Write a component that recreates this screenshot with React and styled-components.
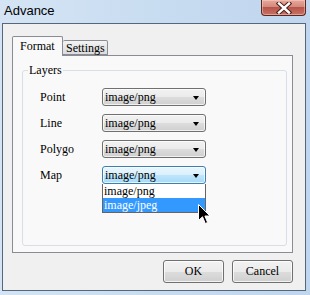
import styled, { createGlobalStyle } from "styled-components";

const Global = createGlobalStyle`
    html, body { margin: 0; padding: 0; }
    body { background: #c8dcf0; }
`;

const serif = `"Liberation Serif", "Times New Roman", serif`;

export default function App() {
    let layers = ["Point", "Line", "Polygo", "Map"];

    return (
        <Window>
            <Global />
            <TitleBar>
                <Title>Advance</Title>
                <CloseButton>
                    <svg width="16" height="12" viewBox="0 0 16 12">
                        <path d="M3 1.5 L13 10.5 M13 1.5 L3 10.5" stroke="#4a1d16" strokeWidth="4.4" strokeLinecap="square" />
                        <path d="M3 1.5 L13 10.5 M13 1.5 L3 10.5" stroke="#ffffff" strokeWidth="2.4" strokeLinecap="square" />
                    </svg>
                </CloseButton>
            </TitleBar>
            <Client>
                <TabStrip>
                    <Tab selected>Format</Tab>
                    <Tab>Settings</Tab>
                </TabStrip>
                <TabPanel>
                    <GroupBox>
                        <Legend>Layers</Legend>
                        <Rows>
                            {layers.map((name) => (
                                <Row key={name}>
                                    <Label>{name}</Label>
                                    <SelectWrap>
                                        <Select hot={name === "Map"}>
                                            <span>image/png</span>
                                            <Arrow />
                                        </Select>
                                        {name === "Map" && (
                                            <>
                                                <DropList>
                                                    <Option>image/png</Option>
                                                    <Option active>image/jpeg</Option>
                                                </DropList>
                                                <Cursor width="13" height="21" viewBox="0 0 13 21">
                                                    <path d="M0.5 0.5 L0.5 16.5 L4.5 12.8 L7.3 19.5 L9.6 18.5 L6.9 12 L12 12 Z" fill="#000" stroke="#fff" strokeWidth="1" />
                                                </Cursor>
                                            </>
                                        )}
                                    </SelectWrap>
                                </Row>
                            ))}
                        </Rows>
                    </GroupBox>
                </TabPanel>
                <Buttons>
                    <Button>OK</Button>
                    <Button>Cancel</Button>
                </Buttons>
            </Client>
        </Window>
    )
}

const Window = styled.div`
    width: 310px;
    height: 295px;
    box-sizing: border-box;
    padding: 0 4px 4px 2px;
    display: flex;
    flex-direction: column;
    background: linear-gradient(to right, #d4e4f4, #c6dbf0 60%, #c0d6ee);
`

const TitleBar = styled.div`
    height: 24px;
    display: flex;
    justify-content: space-between;
    align-items: flex-start;
`

const Title = styled.div`
    padding: 3px 0 0 2px;
    font-family: "Liberation Sans", Arial, sans-serif;
    font-size: 13px;
    line-height: 15px;
    color: #000;
`

const CloseButton = styled.div`
    width: 45px;
    height: 16px;
    box-sizing: border-box;
    border: 1px solid #5a2820;
    border-top: none;
    border-radius: 0 0 4px 4px;
    display: flex;
    align-items: center;
    justify-content: center;
    background: linear-gradient(#e6a89b, #d48a7c 45%, #b8554a 50%, #c77264 100%);
    box-shadow: inset 0 0 0 1px rgba(255, 220, 210, 0.45);
`

const Client = styled.div`
    flex: 1;
    display: flex;
    flex-direction: column;
    border: 1px solid #55677a;
    background: #f0f0f0;
    padding: 12px 12px 7px 9px;
`

const TabStrip = styled.div`
    display: flex;
    align-items: flex-end;
    height: 19px;
    position: relative;
    z-index: 1;
`

const Tab = styled.div`
    box-sizing: border-box;
    border: 1px solid #898c95;
    border-bottom: ${(p) => (p.selected ? "none" : "1px solid #898c95")};
    border-left: ${(p) => (p.selected ? "1px solid #898c95" : "none")};
    border-radius: 2px 2px 0 0;
    height: ${(p) => (p.selected ? "20px" : "15px")};
    margin-bottom: ${(p) => (p.selected ? "-1px" : "0")};
    width: ${(p) => (p.selected ? "51px" : "45px")};
    padding: ${(p) => (p.selected ? "3px 0 0 7px" : "1px 0 0 3px")};
    background: ${(p) => (p.selected ? "#f9f9f9" : "linear-gradient(#f4f4f4, #e6e6e6 50%, #dcdcdc)")};
    font-family: ${serif};
    font-size: 12px;
    line-height: 13px;
    color: #000;
`

const TabPanel = styled.div`
    height: 198px;
    box-sizing: border-box;
    border: 1px solid #898c95;
    background: #f9f9f9;
    padding: 7px 5px 6px 9px;
    display: flex;
`

const GroupBox = styled.fieldset`
    flex: 1;
    margin: 0;
    padding: 0;
    min-width: 0;
    border: 1px solid #d5dfe5;
    border-radius: 3px;
`

const Legend = styled.legend`
    margin-left: 5px;
    padding: 0 1px;
    font-family: ${serif};
    font-size: 12px;
    line-height: 15px;
    color: #000;
`

const Rows = styled.div`
    display: grid;
    row-gap: 8px;
    padding: 10px 0 0 17px;
`

const Row = styled.div`
    display: grid;
    grid-template-columns: 62px 104px;
    align-items: center;
    height: 18px;
`

const Label = styled.div`
    font-family: ${serif};
    font-size: 12px;
    color: #000;
`

const SelectWrap = styled.div`
    position: relative;
`

const Select = styled.div`
    height: 18px;
    box-sizing: border-box;
    border: 1px solid ${(p) => (p.hot ? "#3c7fb1" : "#707070")};
    border-radius: 3px;
    display: flex;
    align-items: center;
    justify-content: space-between;
    padding: 0 6px 0 2px;
    background: ${(p) =>
        p.hot
            ? "linear-gradient(#eaf6fd, #d9f0fc 50%, #bee6fd 50%, #a7d9f5)"
            : "linear-gradient(#f2f2f2, #ebebeb 50%, #dddddd 50%, #cfcfcf)"};
    box-shadow: inset 0 0 0 1px rgba(255, 255, 255, 0.7);
    font-family: ${serif};
    font-size: 12px;
    color: #000;
`

const Arrow = styled.span`
    width: 0;
    height: 0;
    border-left: 3.5px solid transparent;
    border-right: 3.5px solid transparent;
    border-top: 4px solid #000;
    margin-top: 1px;
`

const DropList = styled.div`
    position: absolute;
    top: 100%;
    left: 0;
    width: 104px;
    box-sizing: border-box;
    border: 1px solid #646464;
    border-top: none;
    background: #fff;
    z-index: 2;
`

const Option = styled.div`
    height: 14px;
    line-height: 14px;
    padding-left: 1px;
    font-family: ${serif};
    font-size: 12px;
    color: ${(p) => (p.active ? "#fff" : "#000")};
    background: ${(p) => (p.active ? "#3399ff" : "transparent")};
`

const Cursor = styled.svg`
    position: absolute;
    left: 96px;
    top: 38px;
    z-index: 3;
`

const Buttons = styled.div`
    display: flex;
    justify-content: flex-end;
    gap: 8px;
    margin-top: 7px;
`

const Button = styled.div`
    width: 61px;
    height: 23px;
    box-sizing: border-box;
    border: 1px solid #707070;
    border-radius: 3px;
    display: flex;
    align-items: center;
    justify-content: center;
    background: linear-gradient(#f2f2f2, #ebebeb 50%, #dddddd 50%, #cfcfcf);
    box-shadow: inset 0 0 0 1px rgba(255, 255, 255, 0.75);
    font-family: ${serif};
    font-size: 12px;
    color: #000;
`
